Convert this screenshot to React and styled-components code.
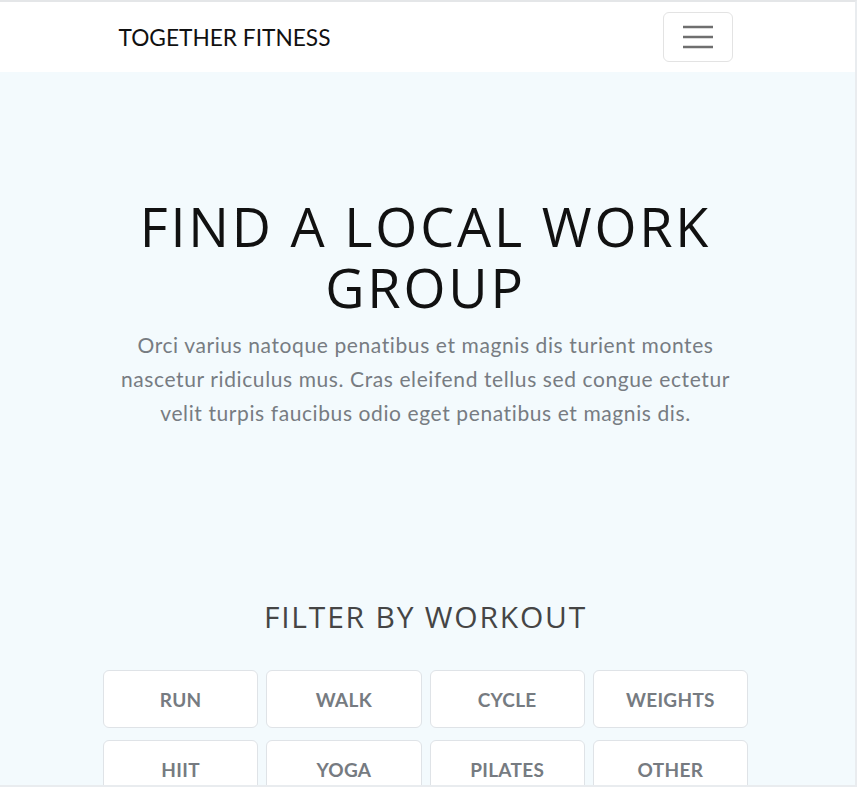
import React from "react";
import styled, { createGlobalStyle } from "styled-components";

const Global = createGlobalStyle`
  html, body { margin: 0; padding: 0; height: 100%; overflow: hidden; }
  body { background: #f3fafd; font-family: "Lato", "Liberation Sans", sans-serif; }
  * { box-sizing: border-box; }
`;

const Frame = styled.div`
  height: 100vh;
  overflow: hidden;
  border-top: 2px solid #e4e6e8;
  border-right: 2px solid #e9ecef;
  border-bottom: 2px solid #e9ecef;
  background: #f3fafd;
  padding-right: 4px;
  display: flex;
  flex-direction: column;
`;

const NavBar = styled.nav`
  background: #ffffff;
  height: 70px;
  margin-right: -4px;
  padding-right: 4px;
  flex: none;
`;

const Container = styled.div`
  max-width: ${(p) => p.$w || 638}px;
  margin: 0 auto;
  padding: 0 12px;
  height: 100%;
`;

const NavInner = styled(Container)`
  display: flex;
  align-items: center;
  justify-content: space-between;
`;

const Brand = styled.a`
  font-family: "Lato", "Liberation Sans", sans-serif;
  font-size: 22.7px;
  color: #111;
  text-decoration: none;
`;

const Toggler = styled.button`
  width: 70px;
  height: 50px;
  background: #fff;
  border: 1px solid #e3e3e3;
  border-radius: 6px;
  display: flex;
  align-items: center;
  justify-content: center;
  padding: 0;
`;

const Hero = styled.section`
  padding: 124px 0 0;
  text-align: center;
`;

const Title = styled.h1`
  font-family: "Open Sans", "Liberation Sans", sans-serif;
  font-weight: 400;
  font-size: 54px;
  line-height: 61px;
  letter-spacing: 2.8px;
  color: #111;
  margin: 0 0 10px;
`;

const Lead = styled.p`
  font-family: "Lato", "Liberation Sans", sans-serif;
  font-size: 21px;
  line-height: 34px;
  letter-spacing: 0.6px;
  color: #777c82;
  margin: 0;
`;

const FilterSection = styled.section`
  padding-top: 167px;
  text-align: center;
`;

const SubTitle = styled.h2`
  font-family: "Open Sans", "Liberation Sans", sans-serif;
  font-weight: 400;
  font-size: 30px;
  line-height: 40px;
  letter-spacing: 1.8px;
  color: #454545;
  margin: 0 0 33px;
`;

const Grid = styled.div`
  width: 645px;
  margin: 0 auto;
  display: grid;
  grid-template-columns: repeat(4, 1fr);
  column-gap: 8px;
  row-gap: 12px;
`;

const FilterButton = styled.button`
  height: 58px;
  background: #fff;
  border: 1px solid #dfe3e7;
  border-radius: 6px;
  font-family: "Lato", "Liberation Sans", sans-serif;
  font-weight: 700;
  font-size: 19px;
  letter-spacing: 0.3px;
  color: #767b81;
  text-transform: uppercase;
  padding: 0;
`;

const workouts = ["Run", "Walk", "Cycle", "Weights", "HIIT", "Yoga", "Pilates", "Other"];

export default function App() {
  return (
    <>
      <Global />
      <Frame>
        <NavBar>
          <NavInner>
            <Brand href="#">TOGETHER FITNESS</Brand>
            <Toggler aria-label="Toggle navigation">
              <svg width="30" height="30" viewBox="0 0 30 30">
                <path
                  d="M0 5h30M0 15h30M0 25h30"
                  stroke="#6f6f6f"
                  strokeWidth="2.4"
                  fill="none"
                />
              </svg>
            </Toggler>
          </NavInner>
        </NavBar>
        <Hero>
          <Container>
            <Title>FIND A LOCAL WORK GROUP</Title>
            <Lead>
              Orci varius natoque penatibus et magnis dis turient montes nascetur ridiculus mus.
              Cras eleifend tellus sed congue ectetur velit turpis faucibus odio eget penatibus et
              magnis dis.
            </Lead>
          </Container>
        </Hero>
        <FilterSection>
          <SubTitle>FILTER BY WORKOUT</SubTitle>
          <Grid>
            {workouts.map((w) => (
              <FilterButton key={w}>{w}</FilterButton>
            ))}
          </Grid>
        </FilterSection>
      </Frame>
    </>
  );
}
